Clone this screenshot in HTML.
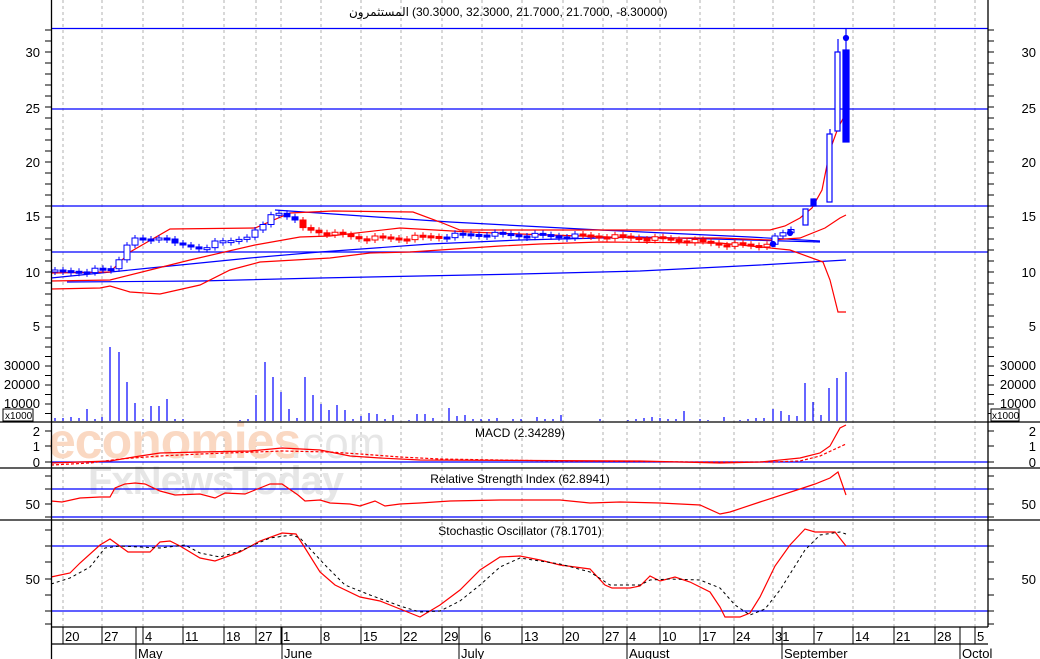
<!DOCTYPE html>
<html><head><meta charset="utf-8"><style>
body{margin:0;background:#fff;}
svg{display:block;font-family:"Liberation Sans","DejaVu Sans",sans-serif;}
</style></head><body>
<svg id="s" width="1040" height="659" viewBox="0 0 1040 659" xmlns="http://www.w3.org/2000/svg">
<rect width="1040" height="659" fill="#fff"/>
<g id="grid" stroke="#b0b0b0" stroke-dasharray="3,3" stroke-width="1"></g>
<text x="48" y="458" font-size="50" fill="#fad8c2" font-weight="bold" letter-spacing="-1">economies</text>
<text x="290" y="458" font-size="44" fill="#e6e6e6">.com</text>
<text x="88" y="494" font-size="40" fill="#e6e6e6" font-weight="bold" letter-spacing="-1">FxNewsToday</text>
<g id="hl" stroke="#0000ff" stroke-width="1.2" fill="none">
<line x1="51" y1="28.5" x2="988" y2="28.5"/><line x1="51" y1="109" x2="988" y2="109"/>
<line x1="51" y1="206" x2="988" y2="206"/><line x1="51" y1="252" x2="988" y2="252"/>
<polyline points="67,282 200,281 320,278 420,276 520,274 640,271 760,265 846,260"/>
<polyline points="275,210 450,222 600,230 750,237 820,241"/>
<polyline points="51,278 150,268 250,258 320,252 430,244 520,240 640,237 820,242"/>
<line x1="51" y1="462" x2="988" y2="462"/>
<line x1="51" y1="489" x2="988" y2="489"/><line x1="51" y1="517" x2="988" y2="517"/>
<line x1="51" y1="546" x2="988" y2="546"/><line x1="51" y1="611" x2="988" y2="611"/>
</g>
<g stroke="#ff0000" stroke-width="1.2" fill="none">
<polyline points="51,273 110,272 120,262 130,252 170,229 255,228 290,213 333,211 413,212 440,222 460,230 770,230 785,226 800,218 812,208 822,190 830,150 838,128 846,113"/>
<polyline points="51,281 110,280 150,270 190,260 255,245 300,237 330,236 400,228 470,232 520,234 640,238 720,238 770,240 800,238 825,228 840,218 846,215"/>
<polyline points="51,289 100,288 110,286 130,292 160,294 200,285 230,270 260,262 330,258 370,253 410,252 500,246 540,244 600,242 720,243 790,250 823,262 830,280 838,312 846,312"/>
<polyline points="51,463 80,462 110,461 140,456 160,453 200,452 250,451 282,448 320,450 350,456 380,458 420,460 640,461 680,462 720,463 760,462 800,458 820,453 830,446 840,428 846,425"/>
<polyline stroke-dasharray="3,2" points="51,465 90,463 120,459 160,456 200,454 282,451 330,452 360,454 400,457 440,459 560,461 700,462 770,462 800,461 820,456 846,444"/>
<polyline points="51,501 62,502 80,498 100,497 110,497 115,488 125,484 135,483 145,484 160,491 175,495 200,494 215,498 225,493 245,494 255,490 270,484 282,484 298,495 305,501 320,500 330,503 350,504 360,506 375,501 385,506 400,504 420,503 450,501 500,500 560,500 590,503 620,502 660,503 700,505 720,514 730,512 760,502 800,489 815,484 830,478 838,472 846,495"/>
<polyline points="51,577 70,573 80,563 100,545 110,539 128,552 150,552 160,542 170,541 180,546 200,558 215,561 240,552 260,541 282,533 296,534 305,548 320,572 335,585 360,597 380,601 400,609 420,617 440,605 460,590 480,570 500,557 520,556 540,560 560,565 590,569 605,585 612,588 630,588 640,586 650,576 660,581 675,577 690,582 710,592 720,607 725,617 740,617 750,613 760,597 775,566 790,545 805,529 815,532 835,532 846,546"/>
</g>
<polyline stroke="#000" stroke-width="1" stroke-dasharray="3,3" fill="none" points="51,584 70,578 90,567 105,548 120,546 160,548 185,545 200,553 220,557 240,551 270,538 292,535 300,538 325,565 345,585 370,595 400,606 420,612 440,611 460,601 480,585 500,567 520,558 560,564 590,572 610,585 640,585 650,580 670,579 700,580 720,588 735,605 750,615 765,609 780,590 805,550 820,535 840,532 846,534"/>
<g id="candles"></g>
<g id="vol" stroke="#0000ff" stroke-width="1.2"></g>
<g stroke="#0000ff" stroke-width="1.2">
<line x1="846" y1="28" x2="846" y2="50"/><rect x="843" y="50" width="6" height="92" fill="#0000ff"/>
<circle cx="846" cy="38" r="2.5" fill="#0000ff"/>
<line x1="838" y1="39" x2="838" y2="52"/><rect x="835" y="52" width="5" height="79" fill="#fff"/>
<line x1="830" y1="129" x2="830" y2="134"/><rect x="827" y="134" width="5" height="68" fill="#fff"/>
<rect x="811" y="199" width="5" height="7" fill="#0000ff"/>
<rect x="803" y="209" width="5" height="16" fill="#fff"/>
<circle cx="790" cy="233" r="2.5" fill="#0000ff"/><circle cx="773" cy="244" r="2.5" fill="#0000ff"/>
</g>
<g stroke="#000" stroke-width="1.3">
<line x1="51.5" y1="0" x2="51.5" y2="659"/><line x1="988" y1="0" x2="988" y2="627"/>
<line x1="0" y1="422" x2="1040" y2="422"/><line x1="0" y1="468" x2="1040" y2="468"/>
<line x1="0" y1="520" x2="1040" y2="520"/><line x1="51" y1="627" x2="988" y2="627"/>
<line x1="51" y1="644" x2="988" y2="644"/>
</g>
<g id="ticks" stroke="#000" stroke-width="1"></g>
<g id="dt" stroke="#000" stroke-width="1"></g>
<g font-size="13" fill="#000">
<g text-anchor="end">
<text x="40" y="57">30</text><text x="40" y="113">25</text><text x="40" y="167">20</text><text x="40" y="221">15</text><text x="40" y="277">10</text><text x="40" y="331">5</text>
<text x="40" y="370">30000</text><text x="40" y="389">20000</text><text x="40" y="408">10000</text>
<text x="40" y="436">2</text><text x="40" y="451">1</text><text x="40" y="467">0</text>
<text x="40" y="509">50</text><text x="40" y="584">50</text>
</g>
<g text-anchor="end">
<text x="1036" y="57">30</text><text x="1036" y="113">25</text><text x="1036" y="167">20</text><text x="1036" y="221">15</text><text x="1036" y="277">10</text><text x="1036" y="331">5</text>
<text x="1036" y="370">30000</text><text x="1036" y="389">20000</text><text x="1036" y="408">10000</text>
<text x="1036" y="436">2</text><text x="1036" y="451">1</text><text x="1036" y="467">0</text>
<text x="1036" y="509">50</text><text x="1036" y="584">50</text>
</g>
<text x="409" y="16" font-size="12" text-anchor="end">المستثمرون</text>
<text x="412" y="16" font-size="12">(30.3000, 32.3000, 21.7000, 21.7000, -8.30000)</text>
<text x="520" y="437" font-size="12" text-anchor="middle">MACD (2.34289)</text>
<text x="520" y="483" font-size="12" text-anchor="middle">Relative Strength Index (62.8941)</text>
<text x="520" y="535" font-size="12" text-anchor="middle">Stochastic Oscillator (78.1701)</text>
</g>
<rect x="3" y="409" width="30" height="12" fill="#fff" stroke="#000"/><text x="5" y="419" font-size="10">x1000</text>
<rect x="991" y="409" width="28" height="12" fill="#fff" stroke="#000"/><text x="992" y="419" font-size="10">x1000</text>
<g font-size="13" id="dl"></g>
</svg>
<script>
(function(){
var NS="http://www.w3.org/2000/svg";
function el(p,t,a,txt){var e=document.createElementNS(NS,t);for(var k in a)e.setAttribute(k,a[k]);if(txt)e.textContent=txt;document.getElementById(p).appendChild(e);return e;}
var gx=[63,102,143,183,224,256,281,321,361,401,442,482,522,563,603,627,660,700,734,773,814,853,894,935,975];
gx.forEach(function(x){el("grid","line",{x1:x,y1:0,x2:x,y2:627});});
var y;
for(y=30;y<340;y+=11){el("ticks","line",{x1:45,y1:y,x2:51,y2:y});el("ticks","line",{x1:988,y1:y,x2:994,y2:y});}
for(y=347;y<422;y+=9.5){el("ticks","line",{x1:45,y1:y,x2:51,y2:y});el("ticks","line",{x1:988,y1:y,x2:994,y2:y});}
[431,446,462,476,489,504,517,530,546,562,579,595,611,624].forEach(function(y){el("ticks","line",{x1:45,y1:y,x2:51,y2:y});el("ticks","line",{x1:988,y1:y,x2:994,y2:y});});
var dates=[[63,"20"],[102,"27"],[143,"4"],[183,"11"],[224,"18"],[256,"27"],[281,"1"],[321,"8"],[361,"15"],[401,"22"],[442,"29"],[482,"6"],[522,"13"],[563,"20"],[603,"27"],[627,"4"],[660,"10"],[700,"17"],[734,"24"],[773,"31"],[814,"7"],[853,"14"],[894,"21"],[935,"28"],[975,"5"]];
dates.forEach(function(d){el("dt","line",{x1:d[0],y1:627,x2:d[0],y2:644});el("dl","text",{x:d[0]+2,y:641},d[1]);});
[[136,"May"],[282,"June"],[459,"July"],[627,"August"],[782,"September"],[960,"Octol"]].forEach(function(m){el("dt","line",{x1:m[0],y1:627,x2:m[0],y2:659});el("dl","text",{x:m[0]+2,y:658},m[1]);});
var kp=[[55,272],[100,270],[117,268],[122,245],[135,240],[150,240],[165,235],[175,245],[200,248],[215,243],[235,240],[260,230],[270,215],[280,212],[290,216],[300,228],[320,232],[360,238],[400,238],[440,236],[480,234],[520,235],[560,236],[600,236],[640,238],[680,240],[720,244],[760,246],[775,238],[790,230],[800,225]];
function iy(x){for(var i=1;i<kp.length;i++){if(x<=kp[i][0]){var a=kp[i-1],b=kp[i];return a[1]+(b[1]-a[1])*(x-a[0])/(b[0]-a[0]);}}return kp[kp.length-1][1];}
var prev=iy(55);
for(var x=55;x<=798;x+=8){
 var c=iy(x)+((x*7)%5-2);var o=prev;prev=c;
 var red=(x>300&&x<440)||(x>580&&x<770);var col=red?"#ff0000":"#0000ff";
 var bt=Math.min(o,c),h=Math.max(2,Math.abs(o-c));
 el("candles","line",{x1:x,y1:bt-3,x2:x,y2:bt+h+3,stroke:col,"stroke-width":1});
 el("candles","rect",{x:x-3,y:bt,width:6,height:h,fill:(c>o)?col:"#fff",stroke:col,"stroke-width":1});
}
var v=[[55,418],[63,418],[71,417],[79,418],[87,409],[95,419],[102,417],[110,347],[119,352],[127,382],[135,403],[143,419],[151,406],[159,406],[167,399],[175,419],[183,419],[192,421],[240,420],[248,419],[256,395],[265,362],[273,377],[281,392],[289,409],[297,418],[305,377],[313,395],[321,404],[329,410],[337,405],[345,410],[353,419],[361,416],[369,413],[377,414],[385,419],[393,415],[409,420],[417,414],[425,414],[433,418],[449,408],[457,416],[465,415],[473,419],[481,419],[489,419],[497,418],[513,419],[521,419],[537,417],[545,419],[553,419],[561,415],[600,419],[628,420],[636,419],[644,418],[652,417],[660,418],[668,419],[676,419],[684,411],[700,419],[708,420],[724,417],[740,420],[748,419],[756,418],[764,418],[773,409],[781,411],[789,415],[797,416],[805,383],[813,402],[821,415],[829,388],[837,378],[846,372]];
v.forEach(function(b){el("vol","line",{x1:b[0],y1:b[1],x2:b[0],y2:421});});
})();
</script>
</body></html>
